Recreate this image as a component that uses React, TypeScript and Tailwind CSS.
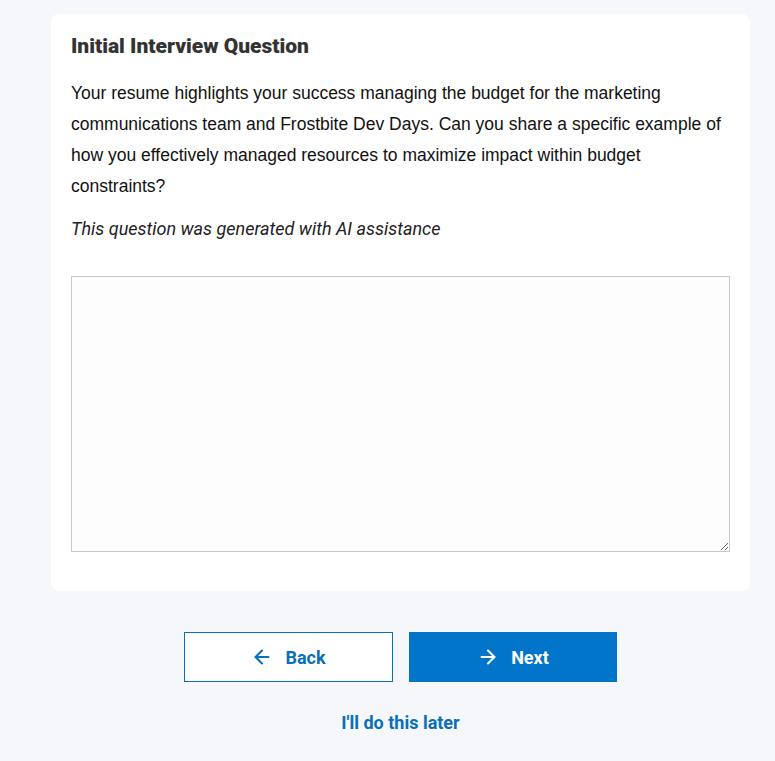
import { ArrowLeft, ArrowRight } from 'lucide-react'

function App() {
  return (
    <div className="min-h-[761px] bg-[#f5f7fb] pt-[14px]">
      <div className="ml-[51px] w-[699px]">
        <div className="rounded-lg bg-white px-5 pt-[20px] pb-[39px]">
          <h2 className="font-['Roboto',sans-serif] text-[21px] font-black leading-6 text-[#333]">
            Initial Interview Question
          </h2>
          <p className="mt-[20px] font-['Liberation_Sans',Arial,sans-serif] text-[17.5px] leading-[31px] text-[#111]">
            Your resume highlights your success managing the budget for the marketing communications team and
            Frostbite Dev Days. Can you share a specific example of how you effectively managed resources to maximize
            impact within budget constraints?
          </p>
          <p className="mt-[15px] font-['Roboto',sans-serif] text-[18px] italic leading-6 text-[#222]">
            This question was generated with AI assistance
          </p>
          <textarea
            className="mt-[35px] block h-[276px] w-full border border-[#c8c8c8] bg-[#fdfdfd] p-2 outline-none"
            aria-label="Answer"
          />
        </div>

        <div className="mt-[41px] flex justify-center gap-4">
          <button
            type="button"
            className="flex h-[50px] w-[209px] items-center justify-center gap-3 border border-[#0a6fb8] bg-white font-['Roboto',sans-serif] text-[18px] font-bold text-[#0a6fb8]"
          >
            <ArrowLeft size={22} strokeWidth={2.25} />
            Back
          </button>
          <button
            type="button"
            className="flex h-[50px] w-[208px] items-center justify-center gap-3 bg-[#0075c9] font-['Roboto',sans-serif] text-[18px] font-bold text-white"
          >
            <ArrowRight size={22} strokeWidth={2.25} />
            Next
          </button>
        </div>

        <div className="mt-[27px] text-center">
          <button
            type="button"
            className="font-['Roboto',sans-serif] text-[18px] font-bold text-[#0a6fb8]"
          >
            I'll do this later
          </button>
        </div>
      </div>
    </div>
  )
}

export default App
